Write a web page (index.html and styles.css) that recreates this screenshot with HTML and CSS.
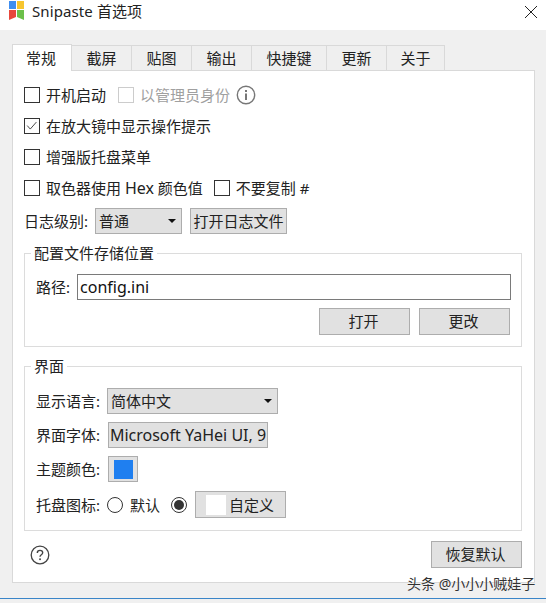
FILE: index.html
```html
<!DOCTYPE html>
<html lang="zh-CN">
<head>
<meta charset="utf-8">
<title>Snipaste 首选项</title>
<link rel="stylesheet" href="styles.css">
</head>
<body>
<div class="window">
  <header class="titlebar">
    <svg class="logo" viewBox="0 0 15 19" width="15" height="19">
      <rect x="0" y="0" width="7" height="8" fill="#3f8ef0"/>
      <rect x="8" y="0" width="7" height="8" fill="#f7c52e"/>
      <path d="M0 9h7v7l-7 3z" fill="#e8483c"/>
      <path d="M8 9h7v10l-7-3z" fill="#6cc04a"/>
    </svg>
    <span class="title">Snipaste 首选项</span>
    <svg class="close" viewBox="0 0 14 14" width="14" height="14"><path d="M1 1l12 12M13 1L1 13" stroke="#222" stroke-width="1" fill="none"/></svg>
  </header>
  <main class="dialog">
    <nav class="tabs">
      <span class="tab active">常规</span>
      <span class="tab">截屏</span>
      <span class="tab">贴图</span>
      <span class="tab">输出</span>
      <span class="tab wide">快捷键</span>
      <span class="tab">更新</span>
      <span class="tab last">关于</span>
    </nav>
    <section class="pane">
      <div class="row row-check">
        <span class="check"></span><span class="label">开机启动</span>
        <span class="check disabled gap-l"></span><span class="label muted">以管理员身份</span>
        <svg class="info" viewBox="0 0 20 20" width="20" height="20"><circle cx="10" cy="10" r="8.7" fill="none" stroke="#777" stroke-width="1.4"/><rect x="9" y="8.5" width="2" height="6.5" fill="#777"/><rect x="9" y="5" width="2" height="2" fill="#777"/></svg>
      </div>
      <div class="row row-check">
        <span class="check"><svg viewBox="0 0 16 16" width="14" height="14"><path d="M2.5 7.5l3.5 4 7-8" fill="none" stroke="#444" stroke-width="1.1"/></svg></span><span class="label">在放大镜中显示操作提示</span>
      </div>
      <div class="row row-check">
        <span class="check"></span><span class="label">增强版托盘菜单</span>
      </div>
      <div class="row row-check row-check-last">
        <span class="check"></span><span class="label">取色器使用 <span class="latin">Hex</span> 颜色值</span>
        <span class="check gap-m"></span><span class="label">不要复制 #</span>
      </div>
      <div class="row row-log">
        <span class="field-label">日志级别:</span>
        <span class="combo combo-log">普通<i class="arrow"></i></span>
        <span class="btn btn-log">打开日志文件</span>
      </div>
      <fieldset class="group group-config">
        <legend>配置文件存储位置</legend>
        <div class="path-row">
          <span class="field-label">路径:</span>
          <span class="input latin">config.ini</span>
        </div>
        <div class="actions">
          <span class="btn btn-action">打开</span>
          <span class="btn btn-action">更改</span>
        </div>
      </fieldset>
      <fieldset class="group group-ui">
        <legend>界面</legend>
        <div class="form-row">
          <span class="field-label">显示语言:</span>
          <span class="combo combo-lang">简体中文<i class="arrow"></i></span>
        </div>
        <div class="form-row">
          <span class="field-label">界面字体:</span>
          <span class="btn btn-font latin">Microsoft YaHei UI, 9</span>
        </div>
        <div class="form-row">
          <span class="field-label">主题颜色:</span>
          <span class="btn btn-color"><i class="swatch"></i></span>
        </div>
        <div class="form-row form-row-tray">
          <span class="field-label">托盘图标:</span>
          <span class="radio"></span><span class="label">默认</span>
          <span class="radio on"></span>
          <span class="btn btn-tray"><i class="tray-icon"></i>自定义</span>
        </div>
      </fieldset>
      <footer class="footer">
        <svg class="help" viewBox="0 0 20 20" width="20" height="20"><circle cx="10" cy="10" r="8.8" fill="none" stroke="#444" stroke-width="1.3"/><path d="M7.3 8c0-1.7 1.2-2.6 2.7-2.6s2.7 1 2.7 2.4c0 2-2.7 2-2.7 4" fill="none" stroke="#444" stroke-width="1.4"/><rect x="9.2" y="13.4" width="1.7" height="1.7" fill="#444"/></svg>
        <span class="btn btn-action">恢复默认</span>
      </footer>
    </section>
  </main>
  <div class="taskline"></div>
  <span class="watermark">头条 @小小小贼娃子</span>
</div>
</body>
</html>
```
FILE: styles.css
```css
* { box-sizing: border-box; }
html, body { margin: 0; padding: 0; }
body {
  width: 546px;
  height: 603px;
  overflow: hidden;
  background: #f0f0f0;
  color: #1a1a1a;
  font-family: "Noto Sans", "Noto Sans CJK SC", sans-serif;
  font-size: 15px;
  line-height: 20px;
}
.latin { font-size: 16px; }
.window { position: relative; width: 546px; height: 603px; display: flex; flex-direction: column; }
.titlebar { height: 30px; flex: none; background: #fff; display: flex; align-items: flex-start; padding: 1px 8px 0 9px; }
.logo { flex: none; }
.title { margin-left: 8px; font-size: 15px; letter-spacing: 0.1px; color: #222; }
.close { margin-left: auto; margin-top: 4px; }
.dialog { flex: none; height: 568px; padding: 14px 11px 0 12px; }
.tabs { display: flex; height: 26px; align-items: flex-end; }
.tab { width: 60px; height: 25px; background: #efefef; border: 1px solid #d9d9d9; border-left: 0; border-bottom: 0; display: flex; align-items: center; justify-content: center; color: #222; }
.tab.wide { width: 75px; }
.tab.last { width: 58px; }
.tab.active { height: 27px; background: #fff; border-left: 1px solid #d9d9d9; margin-bottom: -1px; padding-right: 2px; position: relative; z-index: 1; }
.pane { height: 513px; background: #fff; border: 1px solid #d9d9d9; padding: 16px 12px 0 11px; display: flex; flex-direction: column; }
.row { display: flex; align-items: center; flex: none; }
.row-check { height: 16px; margin-bottom: 15px; }
.row-check-last { margin-bottom: 12px; }
.check { width: 16px; height: 16px; flex: none; border: 1px solid #333; background: #fff; display: flex; align-items: center; justify-content: center; margin-right: 6px; }
.check.disabled { border-color: #ccc; }
.gap-l { margin-left: 12px; }
.gap-m { margin-left: 11px; }
.label { white-space: nowrap; color: #222; }
.muted { color: #a0a0a0; }
.info { margin-left: 6px; }
.row-log { height: 26px; }
.field-label { white-space: nowrap; color: #222; }
.combo, .btn { height: 26px; flex: none; background: #e1e1e1; border: 1px solid #adadad; display: flex; align-items: center; color: #222; white-space: nowrap; }
.combo { padding-left: 3px; position: relative; }
.arrow { position: absolute; right: 5px; top: 10px; width: 0; height: 0; border-left: 4px solid transparent; border-right: 4px solid transparent; border-top: 4px solid #111; }
.btn { justify-content: center; }
.combo-log { width: 87px; margin-left: 7px; }
.btn-log { width: 97px; margin-left: 8px; }
.group { margin: 0; padding: 0; border: 1px solid #dcdcdc; min-width: 0; flex: none; }
.group legend { padding: 0 3px; margin-left: -5px; line-height: 20px; color: #222; }
.group-config { height: 104px; margin-top: 9px; padding: 11px 10px 0 11px; }
.path-row { display: flex; align-items: center; height: 26px; gap: 7px; }
.input { flex: 1; height: 26px; background: #fff; border: 1px solid #7a7a7a; display: flex; align-items: center; padding-left: 2px; color: #111; }
.actions { display: flex; justify-content: flex-end; gap: 9px; margin-top: 8px; padding-right: 1px; }
.btn-action { width: 91px; height: 27px; padding-right: 2px; padding-bottom: 2px; }
.group-ui { height: 175px; margin-top: 9px; padding: 12px 10px 0 11px; }
.form-row { display: flex; align-items: center; height: 26px; margin-bottom: 8px; }
.combo-lang { width: 171px; margin-left: 7px; }
.btn-font { width: 160px; margin-left: 8px; }
.btn-color { width: 30px; margin-left: 8px; }
.swatch { display: block; width: 19px; height: 19px; background: #1f7ff0; }
.form-row-tray { height: 27px; margin-top: 9px; margin-bottom: 0; }
.radio { width: 16px; height: 16px; flex: none; border: 1px solid #333; border-radius: 50%; background: #fff; margin: 0 7px 0 7px; display: flex; align-items: center; justify-content: center; }
.radio.on { margin: 0 8px 0 11px; }
.radio.on::after { content: ""; width: 10px; height: 10px; border-radius: 50%; background: #333; }
.btn-tray { width: 91px; height: 27px; justify-content: flex-start; padding-left: 10px; }
.tray-icon { display: block; width: 20px; height: 20px; background: #fff; margin-right: 3px; }
.footer { display: flex; justify-content: space-between; align-items: center; height: 27px; margin-top: 10px; padding-left: 6px; }
.taskline { height: 1px; flex: none; background: #3a85c8; width: 546px; }
.watermark { position: absolute; left: 407px; top: 575px; font-size: 14px; line-height: 18px; color: #333; text-shadow: 0 0 1px #fff; white-space: nowrap; }
```
